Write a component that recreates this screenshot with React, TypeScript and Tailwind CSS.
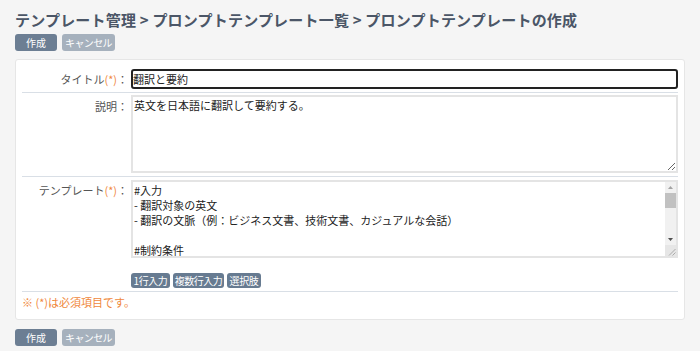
import React from 'react';

const font = { fontFamily: '"Noto Sans CJK JP", "Noto Sans", sans-serif' };

const templateText = `#入力
- 翻訳対象の英文
- 翻訳の文脈（例：ビジネス文書、技術文書、カジュアルな会話）

#制約条件
- 自然な日本語に翻訳すること
- 専門用語は原文を括弧内に併記すること
- 要約は300文字以内にまとめること

#出力
- 翻訳文
- 要約文
- 重要なキーワード（3つまで）

#補足
- 不明な箇所は推測せず、その旨を記載すること`;

function ActionButtons() {
  return (
    <div className="flex gap-[5px]">
      <button
        type="button"
        className="h-[17px] w-[42px] rounded-[3px] bg-[#6c7e93] text-[10px] leading-[17px] text-white"
      >
        作成
      </button>
      <button
        type="button"
        className="h-[17px] w-[53px] whitespace-nowrap rounded-[3px] bg-[#a6b1bd] text-[10px] leading-[17px] tracking-[-0.6px] text-white"
      >
        キャンセル
      </button>
    </div>
  );
}

function Required() {
  return <span className="text-[#f0883c]">(*)</span>;
}

// fake classic scrollbar, headless chrome draws overlay bars otherwise
function ScrollBar() {
  return (
    <div className="flex w-[11px] shrink-0 flex-col bg-[#f1f1f1]">
      <div className="flex h-[11px] items-center justify-center">
        <svg width="5" height="3" viewBox="0 0 5 3">
          <path d="M0 3 L2.5 0 L5 3 Z" fill="#a3a3a3" />
        </svg>
      </div>
      <div className="h-[15px] bg-[#c1c1c1]" />
      <div className="flex-1" />
      <div className="flex h-[11px] items-center justify-center">
        <svg width="5" height="3" viewBox="0 0 5 3">
          <path d="M0 0 L5 0 L2.5 3 Z" fill="#505050" />
        </svg>
      </div>
      <div className="flex h-[11px] items-end justify-end bg-[#e6e6e6]">
        <svg width="8" height="8" viewBox="0 0 8 8">
          <path d="M7.5 1 L1 7.5 M7.5 4.5 L4.5 7.5" stroke="#9a9a9a" strokeWidth="0.8" />
        </svg>
      </div>
    </div>
  );
}

export default function App() {
  return (
    <div className="min-h-[351px] bg-[#f5f5f5] px-[15px] pt-[9px] text-[#333]" style={font}>
      <h1 className="h-[22px] whitespace-nowrap text-[15px] font-bold leading-[22px] tracking-[0.2px] text-[#4b5667]">
        テンプレート管理&nbsp;&gt;&nbsp;プロンプトテンプレート一覧&nbsp;&gt;&nbsp;プロンプトテンプレートの作成
      </h1>
      <div className="mt-[3px]">
        <ActionButtons />
      </div>

      <div className="mt-[8px] rounded-[3px] border border-[#e6e6e6] bg-white px-[6px] pt-[9px]">
        {/* タイトル */}
        <div className="flex border-b border-[#d9dfe6] pb-[3px]">
          <label className="w-[109px] shrink-0 pr-[3px] text-right text-[11px] leading-[20px] text-[#555]">
            タイトル<Required />：
          </label>
          <input
            className="h-[20px] flex-1 rounded-[3px] border-2 border-[#222] px-0 text-[11px] text-[#222] outline-none"
            defaultValue="翻訳と要約"
          />
        </div>

        {/* 説明 */}
        <div className="flex border-b border-[#d9dfe6] pb-[3px] pt-[2px]">
          <label className="w-[109px] shrink-0 pr-[3px] pt-[1px] text-right text-[11px] leading-[20px] text-[#555]">
            説明：
          </label>
          <textarea
            className="h-[78px] flex-1 resize-y border-2 border-[#e4e4e4] px-[1px] py-[1px] text-[11px] leading-[15px] text-[#222] outline-none"
            defaultValue="英文を日本語に翻訳して要約する。"
          />
        </div>

        {/* テンプレート */}
        <div className="flex border-b border-[#d9dfe6] pb-[3px] pt-[3px]">
          <label className="w-[109px] shrink-0 pr-[3px] pt-[1px] text-right text-[11px] leading-[18px] text-[#555]">
            テンプレート<Required />：
          </label>
          <div className="flex flex-1 flex-col">
            <div className="flex h-[78px] border-2 border-[#e4e4e4]">
              <textarea
                className="h-full flex-1 resize-none overflow-hidden border-0 px-[1px] py-[1px] text-[11px] leading-[15px] text-[#222] outline-none"
                defaultValue={templateText}
              />
              <ScrollBar />
            </div>
            <div className="mt-[15px] flex gap-[3px]">
              <button
                type="button"
                className="h-[15px] w-[39px] whitespace-nowrap rounded-[3px] bg-[#677b91] text-[10px] leading-[15px] tracking-[-0.4px] text-white"
              >
                1行入力
              </button>
              <button
                type="button"
                className="h-[15px] w-[51px] whitespace-nowrap rounded-[3px] bg-[#677b91] text-[10px] leading-[15px] tracking-[-0.5px] text-white"
              >
                複数行入力
              </button>
              <button
                type="button"
                className="h-[15px] w-[34px] whitespace-nowrap rounded-[3px] bg-[#677b91] text-[10px] leading-[15px] tracking-[-0.4px] text-white"
              >
                選択肢
              </button>
            </div>
          </div>
        </div>

        <p className="pb-[8px] pt-[1px] text-[11px] leading-[18px] text-[#f0883c]">※ (*)は必須項目です。</p>
      </div>

      <div className="mt-[9px]">
        <ActionButtons />
      </div>
    </div>
  );
}
